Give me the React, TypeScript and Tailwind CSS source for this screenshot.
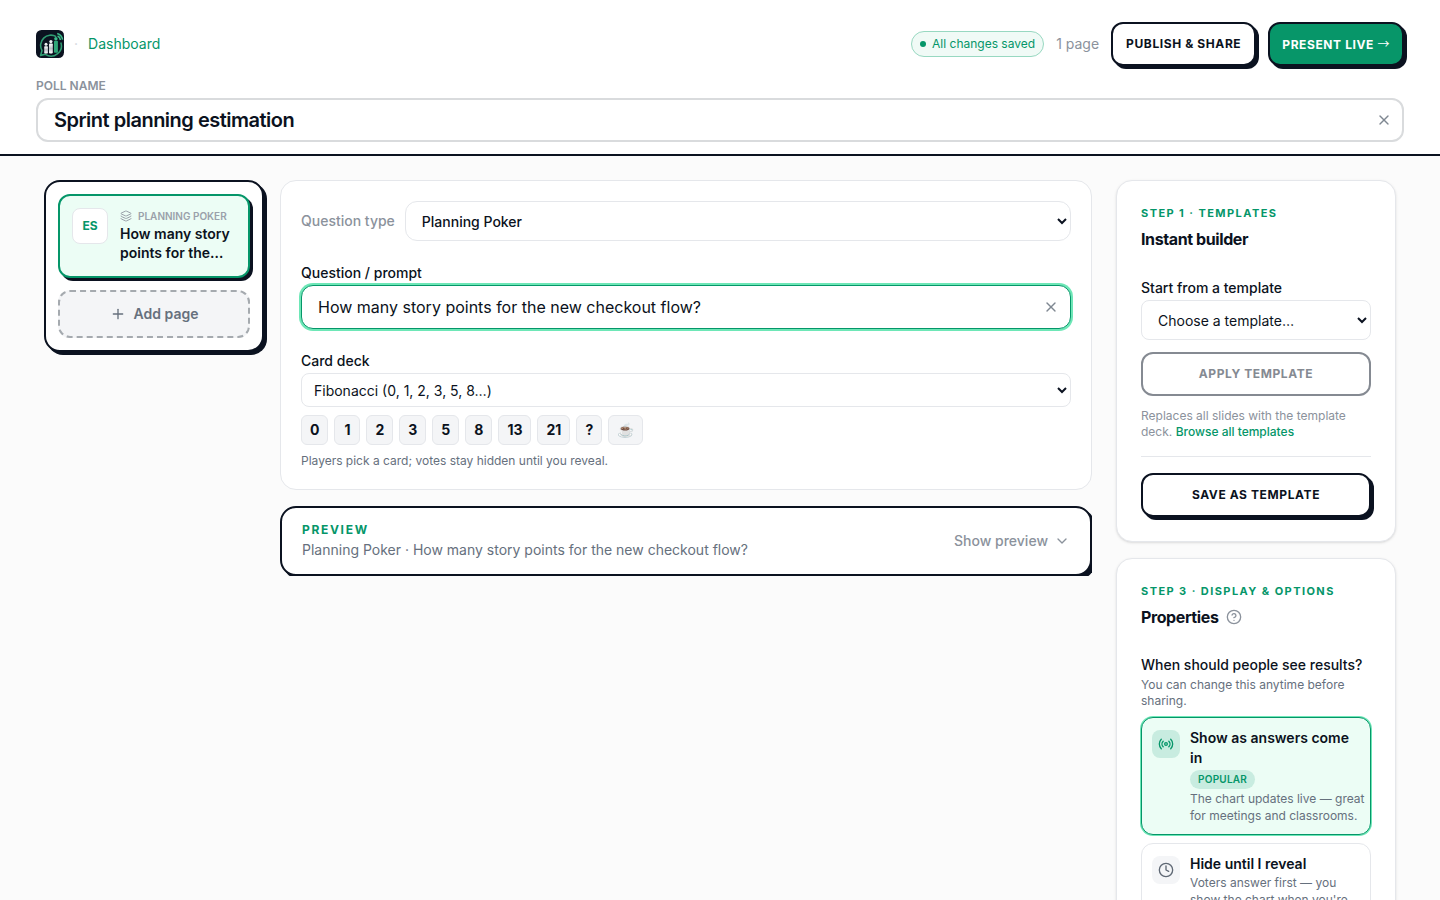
import type { ReactNode } from "react";
import { ChevronDown, CircleHelp, Clock, Layers, Plus, Radio, X } from "lucide-react";

const cards = ["0", "1", "2", "3", "5", "8", "13", "21", "?", "☕"];

function Logo() {
  return (
    <svg viewBox="0 0 28 28" className="size-7" aria-label="Home" role="img">
      <defs>
        <linearGradient id="bar" x1="0" y1="0" x2="0" y2="1">
          <stop offset="0" stopColor="#ffffff" />
          <stop offset="0.5" stopColor="#b9bec4" />
          <stop offset="1" stopColor="#ffffff" />
        </linearGradient>
      </defs>
      <rect width="28" height="28" rx="5.5" fill="#0b1220" />
      <path
        d="M20.2 6.6A10.3 10.3 0 0 0 6 20.6L4.6 25.4L9.4 24.3A10.3 10.3 0 0 0 24.8 12.4"
        fill="none"
        stroke="#2f9c72"
        strokeWidth="1.6"
        strokeLinejoin="round"
      />
      <rect x="8.2" y="16.2" width="3.7" height="7.4" rx="0.8" fill="url(#bar)" />
      <circle cx="10" cy="14.2" r="1.5" fill="#eef1f3" />
      <rect x="13" y="13.6" width="3.8" height="9.8" rx="0.8" fill="url(#bar)" />
      <circle cx="14.9" cy="11.6" r="1.6" fill="#eef1f3" />
      <rect x="18" y="10.8" width="3.9" height="12" rx="0.8" fill="#2fa678" />
      <circle cx="19.9" cy="8.8" r="1.7" fill="#3dbb8b" />
      <path d="M21.6 6A4.8 4.8 0 0 1 24.4 10M21.2 3.4A7.6 7.6 0 0 1 26.6 9.6" fill="none" stroke="#3dbb8b" strokeWidth="1.6" />
    </svg>
  );
}

function StepHeading({ step, title, help }: { step: string; title: string; help?: boolean }) {
  return (
    <div className="mb-[25px]">
      <p className="text-[11px] leading-4 font-bold tracking-[0.13em] text-[#059669] uppercase">{step}</p>
      <div className="mt-1.5 flex items-center gap-2">
        <h2 className="text-base leading-6 font-bold tracking-tight">{title}</h2>
        {help && (
          <button type="button" aria-label="About properties" className="text-[#8b929c]">
            <CircleHelp className="size-4" />
          </button>
        )}
      </div>
    </div>
  );
}

function ResultOption({
  icon,
  title,
  badge,
  children,
  selected,
}: {
  icon: ReactNode;
  title: string;
  badge?: string;
  children: ReactNode;
  selected?: boolean;
}) {
  return (
    <button
      type="button"
      aria-pressed={!!selected}
      className={
        selected
          ? "flex w-full items-start gap-2.5 rounded-xl border border-[#059669] bg-[#ecfdf5] py-2.5 pr-0.5 pl-2.5 text-left shadow-[0_0_0_1px_#6ee7b7]"
          : "flex w-full items-start gap-2.5 rounded-xl border border-gray-200 bg-white py-2.5 pr-0.5 pl-2.5 text-left"
      }
    >
      <span
        className={
          selected
            ? "mt-0.5 flex size-7 shrink-0 items-center justify-center rounded-lg bg-[#c8ece0] text-[#059669]"
            : "mt-0.5 flex size-7 shrink-0 items-center justify-center rounded-lg bg-[#f4f5f7] text-[#5f6874]"
        }
      >
        {icon}
      </span>
      <span className="min-w-0 flex-1">
        <span className="block pr-2 text-sm leading-5 font-semibold">{title}</span>
        {badge && (
          <span className="mt-0.5 mb-px block w-fit rounded-full bg-[#c8ece0] px-2 text-[10px] leading-[19px] font-semibold tracking-wide text-[#059669] uppercase">
            {badge}
          </span>
        )}
        <span className="block text-xs leading-[17px] text-[#66707d]">{children}</span>
      </span>
    </button>
  );
}

export default function App() {
  return (
    <div className="flex h-screen flex-col bg-[#fbfbfb] font-['Inter','Liberation_Sans',sans-serif] text-[#0b1220]">
      <header className="shrink-0 border-b-2 border-[#0b1220] bg-white px-9 pt-[22px] pb-3">
        <div className="flex items-center justify-between">
          <nav className="flex items-center gap-2.5 text-sm">
            <Logo />
            <span className="text-gray-300">·</span>
            <a href="#dashboard" className="text-[#059669]">
              Dashboard
            </a>
          </nav>
          <div className="flex items-center gap-3">
            <span className="flex items-center gap-1.5 rounded-full border border-[#98d8c1] bg-[#f0faf6] px-2 py-1 text-xs text-[#059669]">
              <span className="size-1.5 rounded-full bg-[#059669]" />
              All changes saved
            </span>
            <span className="text-sm text-[#8b929c]">1 page</span>
            <button
              type="button"
              className="h-11 rounded-xl border-2 border-[#0b1220] bg-white px-[13px] text-xs font-bold tracking-wider uppercase shadow-[3px_3px_0_#0b1220]"
            >
              Publish &amp; share
            </button>
            <button
              type="button"
              className="h-11 rounded-xl border-2 border-[#0b1220] bg-[#079669] px-3 text-xs font-bold tracking-wider text-white uppercase shadow-[3px_3px_0_#0b1220]"
            >
              Present live <span className="font-['Noto_Sans_CJK_SC',sans-serif] font-normal">→</span>
            </button>
          </div>
        </div>
        <label htmlFor="poll-name" className="mt-3 mb-1 block text-xs leading-4 font-semibold text-[#8b929c] uppercase">
          Poll name
        </label>
        <div className="flex h-11 items-center rounded-xl border-2 border-[#d9dbdd] bg-white pr-2.5 pl-4">
          <input
            id="poll-name"
            defaultValue="Sprint planning estimation"
            className="min-w-0 flex-1 text-xl font-semibold tracking-tight outline-none"
          />
          <button type="button" aria-label="Clear poll name" className="text-[#7f8791]">
            <X className="size-4" />
          </button>
        </div>
      </header>

      <main className="flex min-h-0 flex-1 items-start overflow-y-auto px-11 py-6 [scrollbar-width:none]">
        <aside className="mr-4 w-[220px] shrink-0 rounded-2xl border-2 border-[#0b1220] bg-white p-3 shadow-[3px_3px_0_#0b1220]">
          <button
            type="button"
            className="flex w-full items-start gap-3 rounded-xl border-2 border-[#059669] bg-[#ecfdf5] px-3 pt-3 pb-3.5 text-left shadow-[3px_3px_0_#0b1220]"
          >
            <span className="flex size-9 shrink-0 items-center justify-center rounded-lg border border-gray-200 bg-white text-xs font-bold text-[#059669]">
              ES
            </span>
            <span className="min-w-0 flex-1">
              <span className="flex items-center gap-1.5 text-[10px] leading-4 font-semibold whitespace-nowrap text-[#9aa1aa] uppercase">
                <Layers className="size-3 shrink-0" />
                Planning Poker
              </span>
              <span className="block text-sm leading-[19px] font-semibold">How many story points for the…</span>
            </span>
          </button>
          <button
            type="button"
            className="mt-3 flex h-12 w-full items-center justify-center gap-2 rounded-xl border-2 border-dashed border-[#a5aaaf] bg-[#f4f5f7] text-sm font-semibold text-[#66707d]"
          >
            <Plus className="size-4" />
            Add page
          </button>
        </aside>

        <div className="mr-6 min-w-0 flex-1">
          <section className="space-y-5 rounded-2xl border border-gray-200 bg-white p-5">
            <div className="flex items-center gap-2.5">
              <label htmlFor="question-type" className="text-sm font-medium text-[#8b929c]">
                Question type
              </label>
              <select
                id="question-type"
                className="h-10 min-w-0 flex-1 rounded-xl border border-gray-200 bg-white px-3 text-sm font-medium"
              >
                <option>Planning Poker</option>
              </select>
            </div>
            <div>
              <label htmlFor="prompt" className="block text-sm leading-6 font-medium">
                Question / prompt
              </label>
              <div className="flex h-11 items-center rounded-xl border border-[#059669] bg-white pr-[11px] pl-4 shadow-[0_0_0_2px_#6ee7b7]">
                <input
                  id="prompt"
                  defaultValue="How many story points for the new checkout flow?"
                  className="min-w-0 flex-1 text-base outline-none"
                />
                <button type="button" aria-label="Clear prompt" className="text-[#7f8791]">
                  <X className="size-4" />
                </button>
              </div>
            </div>
            <div>
              <label htmlFor="deck" className="block text-sm leading-6 font-medium">
                Card deck
              </label>
              <select id="deck" className="h-[34px] w-full rounded-lg border border-gray-200 bg-white px-2 text-sm">
                <option>Fibonacci (0, 1, 2, 3, 5, 8…)</option>
              </select>
              <ul className="mt-2 flex flex-wrap gap-1.5">
                {cards.map((card) => (
                  <li
                    key={card}
                    className="min-w-[26px] rounded-md border border-gray-200 bg-[#f4f5f7] px-2 py-1 text-center text-sm leading-5 font-bold"
                  >
                    {card}
                  </li>
                ))}
              </ul>
              <p className="mt-2 text-xs leading-4 text-[#66707d]">Players pick a card; votes stay hidden until you reveal.</p>
            </div>
          </section>

          <div className="mt-4 overflow-hidden">
            <button
              type="button"
              aria-expanded="false"
              className="flex w-full items-center justify-between rounded-2xl border-2 border-[#0b1220] bg-white px-5 py-3.5 text-left shadow-[3px_3px_0_#0b1220]"
            >
              <span>
                <span className="block text-xs leading-4 font-bold tracking-[0.14em] text-[#059669] uppercase">Preview</span>
                <span className="mt-0.5 block text-sm leading-5 text-[#66707d]">
                  Planning Poker · How many story points for the new checkout flow?
                </span>
              </span>
              <span className="flex items-center gap-1.5 text-sm font-medium text-[#8b929c]">
                Show preview
                <ChevronDown className="size-4" />
              </span>
            </button>
          </div>
        </div>

        <aside className="w-[280px] shrink-0 space-y-4">
          <section className="rounded-2xl border border-gray-200 bg-white p-6 shadow-sm">
            <StepHeading step="Step 1 · Templates" title="Instant builder" />
            <label htmlFor="template" className="block text-sm leading-6 font-medium">
              Start from a template
            </label>
            <select id="template" className="h-10 w-full rounded-lg border border-gray-200 bg-white px-3 text-sm">
              <option>Choose a template…</option>
            </select>
            <button
              type="button"
              disabled
              className="mt-3 h-11 w-full rounded-xl border-2 border-[#858a92] bg-white text-xs font-bold tracking-wider text-[#858a92] uppercase"
            >
              Apply template
            </button>
            <p className="mt-3 text-xs leading-4 text-[#8b929c]">
              Replaces all slides with the template deck.{" "}
              <a href="#templates" className="font-medium text-[#059669]">
                Browse all templates
              </a>
            </p>
            <hr className="my-4 border-gray-200" />
            <button
              type="button"
              className="h-11 w-full rounded-xl border-2 border-[#0b1220] bg-white text-xs font-bold tracking-wider uppercase shadow-[3px_3px_0_#0b1220]"
            >
              Save as template
            </button>
          </section>

          <section className="rounded-2xl border border-gray-200 bg-white p-6 shadow-sm">
            <StepHeading step="Step 3 · Display & options" title="Properties" help />
            <h3 className="text-sm leading-[22px] font-medium">When should people see results?</h3>
            <p className="mt-px mb-2 text-xs leading-4 text-[#66707d]">You can change this anytime before sharing.</p>
            <div className="space-y-2">
              <ResultOption icon={<Radio className="size-4" />} title="Show as answers come in" badge="Popular" selected>
                The chart updates live — great for meetings and classrooms.
              </ResultOption>
              <ResultOption icon={<Clock className="size-4" />} title="Hide until I reveal">
                Voters answer first — you show the chart when you're ready.
              </ResultOption>
            </div>
          </section>
        </aside>
      </main>
    </div>
  );
}
